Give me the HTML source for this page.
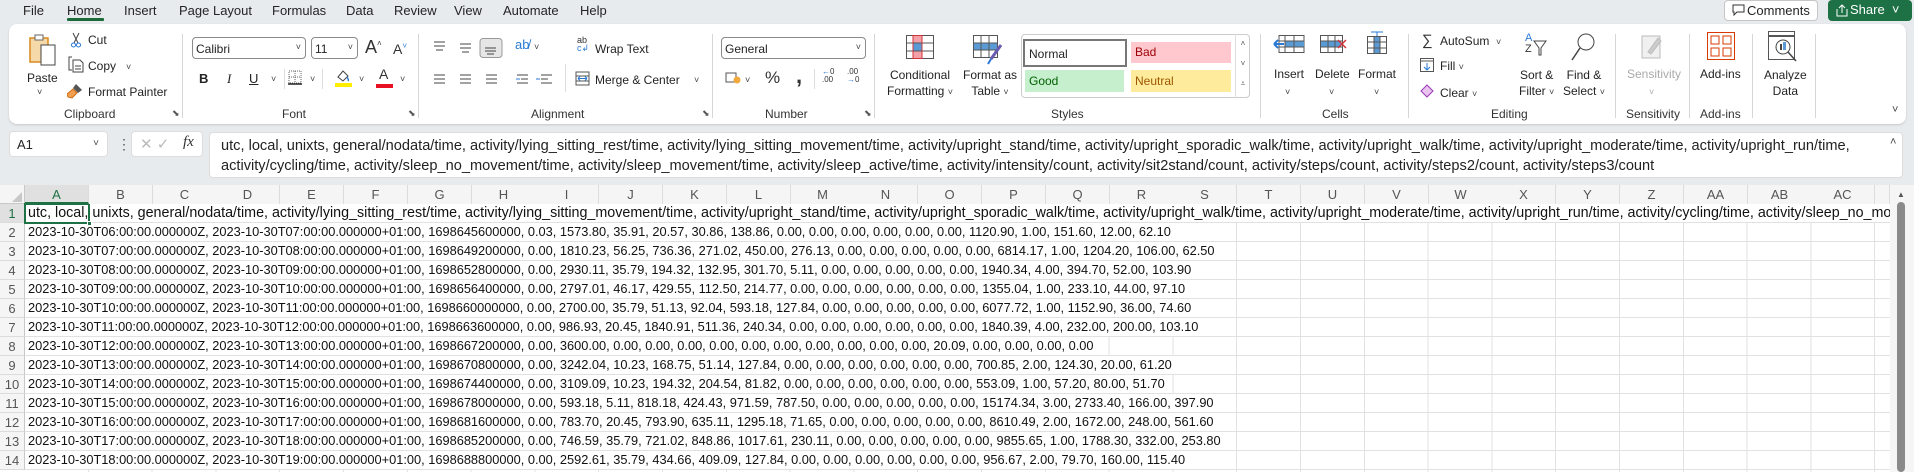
<!DOCTYPE html>
<html><head><meta charset="utf-8">
<style>
*{margin:0;padding:0;box-sizing:border-box}
body{width:1914px;height:472px;overflow:hidden;background:#e8ebee;font-family:"Liberation Sans",sans-serif;color:#242424;position:relative}
.a{position:absolute;white-space:nowrap}
.t{font-size:13px;top:3px}
.lbl{font-size:12px;top:107px;color:#333}
.s12{font-size:12px}
.div{position:absolute;top:34px;width:1px;height:84px;background:#d6d6d6}
.chev{font-size:9px;color:#444}
.box{position:absolute;border:1px solid #8a8a8a;border-radius:4px;background:#fff}
.ch{position:absolute;top:185px;height:19px;font-size:13px;color:#555;text-align:center;line-height:19px;border-right:1px solid #dcdcdc;background:#f5f5f5}
.rh{position:absolute;left:0;width:25px;height:19px;font-size:13px;color:#555;text-align:center;line-height:19px;background:#f5f5f5;border-bottom:1px solid #dcdcdc;border-right:1px solid #c8c8c8}
.row{position:absolute;left:25px;width:1865px;height:19px;border-bottom:1px solid #e1e1e1;overflow:hidden;font-size:12.8px;line-height:18px;color:#111;white-space:nowrap}
.row span{background:#fff;padding:0 3px;display:inline-block;height:18px}
</style></head><body>
<div class="a t" style="left:23px">File</div>
<div class="a t" style="left:67px">Home</div>
<div class="a" style="left:67px;top:18px;width:37px;height:3px;background:#1d6b3b;border-radius:1px"></div>
<div class="a t" style="left:124px">Insert</div>
<div class="a t" style="left:179px">Page Layout</div>
<div class="a t" style="left:272px">Formulas</div>
<div class="a t" style="left:346px">Data</div>
<div class="a t" style="left:394px">Review</div>
<div class="a t" style="left:454px">View</div>
<div class="a t" style="left:503px">Automate</div>
<div class="a t" style="left:580px">Help</div>
<div class="a" style="left:1724px;top:0;width:94px;height:21px;border:1px solid #c6c6c6;border-radius:4px;background:#fff;font-size:13px;line-height:19px;padding-left:22px">Comments</div>
<svg class="a" style="left:1732px;top:4px" width="13" height="12"><path d="M1 1h11v7H5l-3 3V8H1z" fill="none" stroke="#333"/></svg>
<div class="a" style="left:1828px;top:0;width:84px;height:21px;background:#1e7145;border-radius:4px;color:#fff;font-size:13px;line-height:20px;padding-left:22px">Share &nbsp;˅</div>
<svg class="a" style="left:1836px;top:4px" width="12" height="13"><path d="M1 5v7h10V5M6 9V1M3 4l3-3 3 3" fill="none" stroke="#fff"/></svg>

<div class="a" style="left:9px;top:24px;width:1897px;height:100px;background:#fff;border-radius:8px;box-shadow:0 1px 2px #c8c8c8"></div>
<svg class="a" style="left:28px;top:33px" width="30" height="34"><rect x="2" y="5" width="18" height="24" fill="#f5d9a8" stroke="#d98a1e" stroke-width="1.5"/><rect x="7" y="2" width="8" height="5" fill="#fff" stroke="#666"/><rect x="13" y="12" width="14" height="20" fill="#fff" stroke="#444"/></svg>
<div class="a s12" style="left:27px;top:71px">Paste</div>
<div class="a chev" style="left:37px;top:87px">˅</div>
<svg class="a" style="left:70px;top:32px" width="12" height="16"><path d="M3 1l5 10M9 1L4 11" stroke="#444" fill="none"/><circle cx="3.5" cy="13" r="2" fill="none" stroke="#2a7ad5"/><circle cx="8.5" cy="13" r="2" fill="none" stroke="#2a7ad5"/></svg>
<div class="a s12" style="left:88px;top:33px">Cut</div>
<svg class="a" style="left:68px;top:56px" width="16" height="17"><path d="M4 1H1v13h3M5 4h7l3 3v9H5z" fill="none" stroke="#444"/><path d="M7 10h6M7 13h6" stroke="#444"/></svg>
<div class="a s12" style="left:88px;top:59px">Copy &nbsp; <span class="chev">˅</span></div>
<svg class="a" style="left:67px;top:83px" width="16" height="16"><path d="M9 1l6 6-4 3-5-5z" fill="#555"/><path d="M6 6l4 4-5 5-4-1-1-3z" fill="#f0a050" stroke="#d06a10"/></svg>
<div class="a s12" style="left:88px;top:85px">Format Painter</div>
<div class="a lbl" style="left:64px">Clipboard</div>
<div class="a" style="left:172px;top:108px;font-size:9px;color:#555">⬊</div>
<div class="div" style="left:182px"></div>
<div class="box" style="left:192px;top:37px;width:114px;height:22px;font-size:12px;padding:4px 3px">Calibri<span style="position:absolute;right:4px" class="chev">˅</span></div>
<div class="box" style="left:311px;top:37px;width:47px;height:22px;font-size:12px;padding:4px 3px">11<span style="position:absolute;right:4px" class="chev">˅</span></div>
<div class="a" style="left:365px;top:37px;font-size:18px;color:#333">A<sup style="font-size:8px">˄</sup></div>
<div class="a" style="left:393px;top:41px;font-size:14px;color:#333">A<sup style="font-size:8px;color:#2a7ad5">˅</sup></div>
<div class="a" style="left:199px;top:71px;font-size:13px;font-weight:bold">B</div>
<div class="a" style="left:227px;top:71px;font-size:13px;font-style:italic;font-family:'Liberation Serif',serif">I</div>
<div class="a" style="left:249px;top:71px;font-size:13px;text-decoration:underline">U</div>
<div class="a chev" style="left:271px;top:74px">˅</div>
<div class="a" style="left:284px;top:69px;width:1px;height:20px;background:#ddd"></div>
<svg class="a" style="left:288px;top:70px" width="14" height="15"><rect x="1" y="1" width="12" height="12" fill="none" stroke="#666" stroke-dasharray="1 1"/><path d="M7 1v12M1 7h12" stroke="#666" stroke-dasharray="1 1"/><path d="M0 14h14" stroke="#222" stroke-width="1.5"/></svg>
<div class="a chev" style="left:310px;top:74px">˅</div>
<div class="a" style="left:322px;top:69px;width:1px;height:20px;background:#ddd"></div>
<svg class="a" style="left:335px;top:68px" width="18" height="20"><path d="M3 9l5-6 5 5-5 5z" fill="none" stroke="#444"/><path d="M12 9c1 2 2 3 1 4" stroke="#2a7ad5" fill="none" stroke-width="1.5"/><rect x="0" y="15" width="17" height="4" fill="#ffee00"/></svg>
<div class="a chev" style="left:359px;top:74px">˅</div>
<div class="a" style="left:379px;top:66px;font-size:14px;color:#333">A</div>
<div class="a" style="left:376px;top:84px;width:17px;height:4px;background:#e81123"></div>
<div class="a chev" style="left:400px;top:74px">˅</div>
<div class="a lbl" style="left:282px">Font</div>
<div class="a" style="left:408px;top:108px;font-size:9px;color:#555">⬊</div>
<div class="div" style="left:418px"></div>
<svg class="a" style="left:432px;top:38px" width="80" height="20"><g stroke="#444"><path d="M2 4h11M2 8h11M4 12h7"/><path d="M28 6h11M28 10h11M30 14h7"/><rect x="48" y="0.5" width="22" height="19" rx="3" fill="#e6e6e6" stroke="#999"/><path d="M53 10h11M53 13h11M55 16h7"/></g></svg>
<div class="a" style="left:515px;top:37px;font-size:13px;color:#2a7ad5">ab̸</div>
<div class="a chev" style="left:534px;top:42px">˅</div>
<svg class="a" style="left:432px;top:72px" width="130" height="16"><g stroke="#444"><path d="M2 3h11M2 7h11M2 11h11M28 3h11M28 7h11M28 11h11M54 3h11M54 7h11M54 11h11M85 3h11M89 7h7M85 11h11M109 3h11M109 7h7M109 11h11"/></g><path d="M84 7h4M104 7h4" stroke="#2a7ad5"/></svg>
<div class="a" style="left:565px;top:64px;width:1px;height:28px;background:#ddd"></div>
<div class="a" style="left:577px;top:36px;font-size:9px;color:#333;line-height:8px">ab<br><span style="color:#2a7ad5">c↲</span></div>
<div class="a s12" style="left:595px;top:42px">Wrap Text</div>
<svg class="a" style="left:575px;top:71px" width="15" height="15"><rect x="1" y="1" width="13" height="13" fill="none" stroke="#555"/><path d="M1 5h13M1 10h13" stroke="#555"/><path d="M3 7.5h9M3 7.5l2-2M3 7.5l2 2M12 7.5l-2-2M12 7.5l-2 2" stroke="#2a7ad5"/></svg>
<div class="a s12" style="left:595px;top:73px">Merge &amp; Center</div>
<div class="a chev" style="left:694px;top:75px">˅</div>
<div class="a lbl" style="left:531px">Alignment</div>
<div class="a" style="left:702px;top:108px;font-size:9px;color:#555">⬊</div>
<div class="div" style="left:712px"></div>
<div class="box" style="left:721px;top:37px;width:145px;height:22px;font-size:12px;padding:4px 3px">General<span style="position:absolute;right:4px" class="chev">˅</span></div>
<svg class="a" style="left:725px;top:71px" width="16" height="14"><rect x="1" y="2" width="10" height="9" fill="none" stroke="#555"/><circle cx="12" cy="9" r="3.5" fill="#f2a93b"/></svg>
<div class="a chev" style="left:745px;top:75px">˅</div>
<div class="a" style="left:765px;top:68px;font-size:17px;color:#333">%</div>
<div class="a" style="left:796px;top:63px;font-size:22px;font-weight:bold;color:#333">,</div>
<div class="a" style="left:814px;top:69px;width:1px;height:20px;background:#ddd"></div>
<div class="a" style="left:822px;top:68px;font-size:8px;line-height:8px;color:#333"><span style="color:#2a7ad5">←</span>0<br>.00</div>
<div class="a" style="left:847px;top:68px;font-size:8px;line-height:8px;color:#333">.00<br><span style="color:#2a7ad5">→</span>0</div>
<div class="a lbl" style="left:765px">Number</div>
<div class="a" style="left:864px;top:108px;font-size:9px;color:#555">⬊</div>
<div class="div" style="left:874px"></div>
<svg class="a" style="left:906px;top:35px" width="28" height="24"><rect x="0.5" y="0.5" width="27" height="23" fill="#fff" stroke="#555"/><rect x="7" y="1" width="9" height="7" fill="#f4a0a8"/><rect x="7" y="8" width="9" height="8" fill="#5b9bd5"/><rect x="7" y="16" width="9" height="7" fill="#f4a0a8"/><path d="M7 0v24M16 0v24M0 8h28M0 16h28" stroke="#555"/><rect x="7" y="0.5" width="9" height="23" fill="none" stroke="#d13438"/></svg>
<div class="a s12" style="left:887px;top:67px;text-align:center;line-height:16px">Conditional<br>Formatting <span class="chev">˅</span></div>
<svg class="a" style="left:973px;top:35px" width="30" height="30"><rect x="0.5" y="0.5" width="24" height="22" fill="#fff" stroke="#555"/><rect x="1" y="8" width="23" height="7" fill="#5b9bd5"/><path d="M8 0v23M16 0v23M0 8h25M0 15h25" stroke="#555"/><path d="M28 10l-10 14" stroke="#6a5bb0" stroke-width="3"/><path d="M18 24l-3 5" stroke="#2a7ad5" stroke-width="2"/></svg>
<div class="a s12" style="left:963px;top:67px;text-align:center;line-height:16px">Format as<br>Table <span class="chev">˅</span></div>
<div class="a" style="left:1021px;top:34px;width:229px;height:64px;border:1px solid #ccc;border-radius:4px;background:#fff"></div>
<div class="a" style="left:1023px;top:39px;width:104px;height:28px;border:2px solid #777;background:#fff;font-size:12px;padding:6px 4px">Normal</div>
<div class="a" style="left:1131px;top:42px;width:100px;height:21px;background:#ffc7ce;color:#9c0006;font-size:12px;padding:3px 4px">Bad</div>
<div class="a" style="left:1025px;top:70px;width:99px;height:22px;background:#c6efce;color:#006100;font-size:12px;padding:4px 4px">Good</div>
<div class="a" style="left:1131px;top:70px;width:100px;height:22px;background:#ffeb9c;color:#9c5700;font-size:12px;padding:4px 4px">Neutral</div>
<div class="a" style="left:1235px;top:34px;width:15px;height:64px;border-left:1px solid #ddd;font-size:8px;color:#555;text-align:center;line-height:20px">˄<br>˅<br>⩡</div>
<div class="a lbl" style="left:1051px">Styles</div>
<div class="div" style="left:1260px"></div>
<svg class="a" style="left:1273px;top:35px" width="32" height="18"><rect x="6" y="0.5" width="25" height="17" fill="#fff" stroke="#555"/><rect x="12" y="6" width="19" height="6" fill="#5b9bd5"/><path d="M12 0v18M21 0v18M6 6h25M6 12h25" stroke="#555"/><path d="M1 9h10M1 9l4-4M1 9l4 4" stroke="#2a7ad5" stroke-width="2" fill="none"/></svg>
<svg class="a" style="left:1320px;top:35px" width="28" height="18"><rect x="0.5" y="0.5" width="22" height="17" fill="#fff" stroke="#555"/><rect x="1" y="6" width="20" height="6" fill="#5b9bd5"/><path d="M8 0v18M15 0v18M0 6h23M0 12h23" stroke="#555"/><path d="M18 5l8 8M26 5l-8 8" stroke="#d13438" stroke-width="1.5"/></svg>
<svg class="a" style="left:1367px;top:31px" width="20" height="24"><path d="M4 1h12M10 1v4" stroke="#2a7ad5"/><rect x="0.5" y="5.5" width="19" height="17" fill="#fff" stroke="#555"/><rect x="7" y="6" width="6" height="16" fill="#5b9bd5"/><path d="M7 5v18M13 5v18M0 11h20M0 17h20" stroke="#555"/></svg>
<div class="a s12" style="left:1274px;top:67px">Insert</div>
<div class="a s12" style="left:1315px;top:67px">Delete</div>
<div class="a s12" style="left:1358px;top:67px">Format</div>
<div class="a chev" style="left:1285px;top:87px">˅</div><div class="a chev" style="left:1329px;top:87px">˅</div><div class="a chev" style="left:1374px;top:87px">˅</div>
<div class="a lbl" style="left:1322px">Cells</div>
<div class="div" style="left:1408px"></div>
<div class="a" style="left:1422px;top:32px;font-size:15px;color:#333">∑</div>
<div class="a s12" style="left:1440px;top:34px">AutoSum &nbsp;<span class="chev">˅</span></div>
<svg class="a" style="left:1420px;top:58px" width="14" height="14"><rect x="0.5" y="0.5" width="13" height="13" fill="none" stroke="#555"/><path d="M0.5 3h13" stroke="#555"/><path d="M7 5v7M4 9l3 3 3-3" stroke="#2a7ad5" fill="none"/></svg>
<div class="a s12" style="left:1440px;top:59px">Fill <span class="chev">˅</span></div>
<svg class="a" style="left:1420px;top:84px" width="14" height="14"><path d="M7 1l6 6-6 6-6-6z" fill="#e9c4f0" stroke="#9b39b5"/></svg>
<div class="a s12" style="left:1440px;top:86px">Clear <span class="chev">˅</span></div>
<div class="a" style="left:1525px;top:33px;font-size:11px;line-height:11px;color:#2a7ad5">A<br><span style="color:#333">Z</span></div>
<svg class="a" style="left:1533px;top:40px" width="14" height="16"><path d="M1 1h12L8 8v7H6V8z" fill="none" stroke="#444"/></svg>
<svg class="a" style="left:1571px;top:32px" width="24" height="30"><circle cx="15" cy="10" r="8" fill="none" stroke="#444"/><path d="M9 16L1 28" stroke="#444" stroke-width="1.5"/></svg>
<div class="a s12" style="left:1519px;top:67px;text-align:center;line-height:16px">Sort &amp;<br>Filter <span class="chev">˅</span></div>
<div class="a s12" style="left:1563px;top:67px;text-align:center;line-height:16px">Find &amp;<br>Select <span class="chev">˅</span></div>
<div class="a lbl" style="left:1491px">Editing</div>
<div class="div" style="left:1615px"></div>
<svg class="a" style="left:1640px;top:32px" width="24" height="28"><rect x="2" y="4" width="18" height="22" fill="#f0f0f0" stroke="#bbb"/><path d="M8 20l10-14 3 3-10 13z" fill="#ccc" stroke="#bbb"/></svg>
<div class="a s12" style="left:1627px;top:67px;color:#aaa">Sensitivity</div>
<div class="a chev" style="left:1649px;top:87px;color:#aaa">˅</div>
<div class="a lbl" style="left:1626px">Sensitivity</div>
<div class="div" style="left:1689px"></div>
<svg class="a" style="left:1707px;top:32px" width="28" height="28"><rect x="0.5" y="0.5" width="27" height="27" fill="none" stroke="#d83b01"/><rect x="4" y="4" width="8" height="8" fill="none" stroke="#d83b01"/><rect x="16" y="4" width="8" height="8" fill="none" stroke="#d83b01"/><rect x="4" y="16" width="8" height="8" fill="none" stroke="#d83b01"/><rect x="16" y="16" width="8" height="8" fill="none" stroke="#d83b01"/></svg>
<div class="a s12" style="left:1700px;top:67px">Add-ins</div>
<div class="a lbl" style="left:1700px">Add-ins</div>
<div class="div" style="left:1752px"></div>
<svg class="a" style="left:1768px;top:31px" width="34" height="32"><rect x="0.5" y="0.5" width="26" height="28" fill="#fff" stroke="#555"/><path d="M0 5h27" stroke="#555" stroke-width="2"/><circle cx="15" cy="16" r="7" fill="#fff" stroke="#444"/><rect x="12" y="13" width="2" height="6" fill="#444"/><rect x="15" y="11" width="3" height="8" fill="#5b9bd5"/><path d="M20 21l8 9" stroke="#444" stroke-width="1.5"/></svg>
<div class="a s12" style="left:1764px;top:67px;text-align:center;line-height:16px">Analyze<br>Data</div>
<div class="div" style="left:1815px"></div>
<div class="a chev" style="left:1892px;top:104px;font-size:11px">˅</div>

<div class="a" style="left:9px;top:131px;width:99px;height:26px;background:#fff;border-radius:4px;border:1px solid #ddd;font-size:13px;padding:5px 7px">A1<span class="chev" style="position:absolute;right:8px;top:6px;font-size:10px">˅</span></div>
<div class="a" style="left:117px;top:136px;font-size:14px;color:#555">⋮</div>
<div class="a" style="left:131px;top:131px;width:72px;height:26px;background:#fff;border-radius:4px;border:1px solid #ddd"></div>
<div class="a" style="left:140px;top:135px;font-size:15px;color:#bbb">✕ ✓</div>
<div class="a" style="left:183px;top:134px;font-size:15px;font-style:italic;font-family:'Liberation Serif',serif;color:#333">fx</div>
<div class="a" style="left:209px;top:132px;width:1694px;height:46px;background:#fff;border-radius:4px;border:1px solid #ddd"></div>
<div class="a" style="left:221px;top:136px;font-size:14.6px;line-height:20px;color:#222">utc, local, unixts, general/nodata/time, activity/lying_sitting_rest/time, activity/lying_sitting_movement/time, activity/upright_stand/time, activity/upright_sporadic_walk/time, activity/upright_walk/time, activity/upright_moderate/time, activity/upright_run/time,<br>activity/cycling/time, activity/sleep_no_movement/time, activity/sleep_movement/time, activity/sleep_active/time, activity/intensity/count, activity/sit2stand/count, activity/steps/count, activity/steps2/count, activity/steps3/count</div>
<div class="a chev" style="left:1890px;top:136px;font-size:11px">˄</div>

<div class="a" style="left:0;top:185px;width:1914px;height:287px;background:#fff"></div>
<div class="a" style="left:0;top:185px;width:25px;height:19px;background:#f5f5f5;border-right:1px solid #c8c8c8;border-bottom:1px solid #c8c8c8"></div>
<svg class="a" style="left:12px;top:192px" width="10" height="10"><path d="M10 0v10H0z" fill="#c8c8c8"/></svg>
<div class="a" style="left:25px;top:203px;width:1867px;height:1px;background:#c8c8c8"></div>
<div class="a" style="left:0;top:204px;width:1890px;height:268px;background:repeating-linear-gradient(90deg,transparent 0,transparent 62.8px,#e1e1e1 62.8px,#e1e1e1 63.8px);background-position:25px 0"></div>
<div class="rh" style="top:204px;color:#1e7145;background:#e0e0e0">1</div>
<div class="rh" style="top:223px">2</div><div class="rh" style="top:242px">3</div><div class="rh" style="top:261px">4</div><div class="rh" style="top:280px">5</div><div class="rh" style="top:299px">6</div><div class="rh" style="top:318px">7</div><div class="rh" style="top:337px">8</div><div class="rh" style="top:356px">9</div><div class="rh" style="top:375px">10</div><div class="rh" style="top:394px">11</div><div class="rh" style="top:413px">12</div><div class="rh" style="top:432px">13</div><div class="rh" style="top:451px">14</div>
<div class="row" style="top:204px;font-size:14.3px"><span>utc, local, unixts, general/nodata/time, activity/lying_sitting_rest/time, activity/lying_sitting_movement/time, activity/upright_stand/time, activity/upright_sporadic_walk/time, activity/upright_walk/time, activity/upright_moderate/time, activity/upright_run/time, activity/cycling/time, activity/sleep_no_movement/time</span></div>
<div class="row" style="top:223px"><span>2023-10-30T06:00:00.000000Z, 2023-10-30T07:00:00.000000+01:00, 1698645600000, 0.03, 1573.80, 35.91, 20.57, 30.86, 138.86, 0.00, 0.00, 0.00, 0.00, 0.00, 0.00, 1120.90, 1.00, 151.60, 12.00, 62.10</span></div>
<div class="row" style="top:242px"><span>2023-10-30T07:00:00.000000Z, 2023-10-30T08:00:00.000000+01:00, 1698649200000, 0.00, 1810.23, 56.25, 736.36, 271.02, 450.00, 276.13, 0.00, 0.00, 0.00, 0.00, 0.00, 6814.17, 1.00, 1204.20, 106.00, 62.50</span></div>
<div class="row" style="top:261px"><span>2023-10-30T08:00:00.000000Z, 2023-10-30T09:00:00.000000+01:00, 1698652800000, 0.00, 2930.11, 35.79, 194.32, 132.95, 301.70, 5.11, 0.00, 0.00, 0.00, 0.00, 0.00, 1940.34, 4.00, 394.70, 52.00, 103.90</span></div>
<div class="row" style="top:280px"><span>2023-10-30T09:00:00.000000Z, 2023-10-30T10:00:00.000000+01:00, 1698656400000, 0.00, 2797.01, 46.17, 429.55, 112.50, 214.77, 0.00, 0.00, 0.00, 0.00, 0.00, 0.00, 1355.04, 1.00, 233.10, 44.00, 97.10</span></div>
<div class="row" style="top:299px"><span>2023-10-30T10:00:00.000000Z, 2023-10-30T11:00:00.000000+01:00, 1698660000000, 0.00, 2700.00, 35.79, 51.13, 92.04, 593.18, 127.84, 0.00, 0.00, 0.00, 0.00, 0.00, 6077.72, 1.00, 1152.90, 36.00, 74.60</span></div>
<div class="row" style="top:318px"><span>2023-10-30T11:00:00.000000Z, 2023-10-30T12:00:00.000000+01:00, 1698663600000, 0.00, 986.93, 20.45, 1840.91, 511.36, 240.34, 0.00, 0.00, 0.00, 0.00, 0.00, 0.00, 1840.39, 4.00, 232.00, 200.00, 103.10</span></div>
<div class="row" style="top:337px"><span>2023-10-30T12:00:00.000000Z, 2023-10-30T13:00:00.000000+01:00, 1698667200000, 0.00, 3600.00, 0.00, 0.00, 0.00, 0.00, 0.00, 0.00, 0.00, 0.00, 0.00, 0.00, 20.09, 0.00, 0.00, 0.00, 0.00</span></div>
<div class="row" style="top:356px"><span>2023-10-30T13:00:00.000000Z, 2023-10-30T14:00:00.000000+01:00, 1698670800000, 0.00, 3242.04, 10.23, 168.75, 51.14, 127.84, 0.00, 0.00, 0.00, 0.00, 0.00, 0.00, 700.85, 2.00, 124.30, 20.00, 61.20</span></div>
<div class="row" style="top:375px"><span>2023-10-30T14:00:00.000000Z, 2023-10-30T15:00:00.000000+01:00, 1698674400000, 0.00, 3109.09, 10.23, 194.32, 204.54, 81.82, 0.00, 0.00, 0.00, 0.00, 0.00, 0.00, 553.09, 1.00, 57.20, 80.00, 51.70</span></div>
<div class="row" style="top:394px"><span>2023-10-30T15:00:00.000000Z, 2023-10-30T16:00:00.000000+01:00, 1698678000000, 0.00, 593.18, 5.11, 818.18, 424.43, 971.59, 787.50, 0.00, 0.00, 0.00, 0.00, 0.00, 15174.34, 3.00, 2733.40, 166.00, 397.90</span></div>
<div class="row" style="top:413px"><span>2023-10-30T16:00:00.000000Z, 2023-10-30T17:00:00.000000+01:00, 1698681600000, 0.00, 783.70, 20.45, 793.90, 635.11, 1295.18, 71.65, 0.00, 0.00, 0.00, 0.00, 0.00, 8610.49, 2.00, 1672.00, 248.00, 561.60</span></div>
<div class="row" style="top:432px"><span>2023-10-30T17:00:00.000000Z, 2023-10-30T18:00:00.000000+01:00, 1698685200000, 0.00, 746.59, 35.79, 721.02, 848.86, 1017.61, 230.11, 0.00, 0.00, 0.00, 0.00, 0.00, 9855.65, 1.00, 1788.30, 332.00, 253.80</span></div>
<div class="row" style="top:451px"><span>2023-10-30T18:00:00.000000Z, 2023-10-30T19:00:00.000000+01:00, 1698688800000, 0.00, 2592.61, 35.79, 434.66, 409.09, 127.84, 0.00, 0.00, 0.00, 0.00, 0.00, 0.00, 956.67, 2.00, 79.70, 160.00, 115.40</span></div>
<div class="a" style="left:24px;top:203px;width:66px;height:21px;border:2px solid #1e7145"></div>
<div class="a" style="left:87px;top:221px;width:5px;height:5px;background:#1e7145;border:1px solid #fff"></div>
<div class="a" style="left:1890px;top:185px;width:24px;height:287px;background:#f5f5f5"></div>
<div class="a" style="left:1897px;top:190px;font-size:8px;color:#555">▲</div>
<div class="a" style="left:1897px;top:202px;width:8px;height:270px;background:#8a8a8a;border-radius:4px"></div>

<div class="ch" style="left:25px;width:64px;background:#e0e0e0;color:#1e7145;border-bottom:2px solid #1e7145">A</div>
<div class="ch" style="left:89px;width:64px">B</div><div class="ch" style="left:153px;width:64px">C</div><div class="ch" style="left:216px;width:64px">D</div><div class="ch" style="left:280px;width:64px">E</div><div class="ch" style="left:344px;width:64px">F</div><div class="ch" style="left:408px;width:64px">G</div><div class="ch" style="left:472px;width:64px">H</div><div class="ch" style="left:535px;width:64px">I</div><div class="ch" style="left:599px;width:64px">J</div><div class="ch" style="left:663px;width:64px">K</div><div class="ch" style="left:727px;width:64px">L</div><div class="ch" style="left:791px;width:64px">M</div><div class="ch" style="left:854px;width:64px">N</div><div class="ch" style="left:918px;width:64px">O</div><div class="ch" style="left:982px;width:64px">P</div><div class="ch" style="left:1046px;width:64px">Q</div><div class="ch" style="left:1110px;width:64px">R</div><div class="ch" style="left:1173px;width:64px">S</div><div class="ch" style="left:1237px;width:64px">T</div><div class="ch" style="left:1301px;width:64px">U</div><div class="ch" style="left:1365px;width:64px">V</div><div class="ch" style="left:1429px;width:64px">W</div><div class="ch" style="left:1492px;width:64px">X</div><div class="ch" style="left:1556px;width:64px">Y</div><div class="ch" style="left:1620px;width:64px">Z</div><div class="ch" style="left:1684px;width:64px">AA</div><div class="ch" style="left:1748px;width:64px">AB</div><div class="ch" style="left:1811px;width:64px">AC</div><div class="ch" style="left:1875px;width:15px"></div>
</body></html>
